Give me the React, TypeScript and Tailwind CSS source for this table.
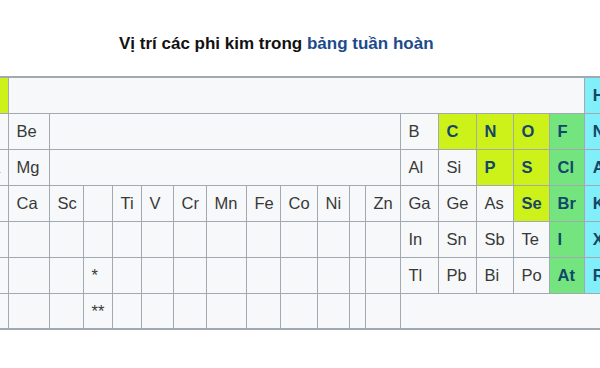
import React from "react";

type Kind = "yg" | "gr" | "cy" | "n" | "e";
type Cell = { t?: string; k: Kind; span?: number };

const widths = [38, 41, 34, 29, 29, 32, 33, 40, 34, 37, 32, 16, 35, 38, 38, 37, 36, 35, 36];

const E = (n = 1): Cell => ({ k: "e", span: n });
const N = (t: string): Cell => ({ t, k: "n" });
const Y = (t: string): Cell => ({ t, k: "yg" });
const G = (t: string): Cell => ({ t, k: "gr" });
const C = (t: string): Cell => ({ t, k: "cy" });

const emptyRun = (n: number): Cell[] => Array.from({ length: n }, () => E());

const rows: Cell[][] = [
  [Y("H"), E(17), C("He")],
  [N("Li"), N("Be"), E(11), N("B"), Y("C"), Y("N"), Y("O"), G("F"), C("Ne")],
  [N("Na"), N("Mg"), E(11), N("Al"), N("Si"), Y("P"), Y("S"), G("Cl"), C("Ar")],
  [
    N("K"), N("Ca"), N("Sc"), E(), N("Ti"), N("V"), N("Cr"), N("Mn"), N("Fe"), N("Co"), N("Ni"), E(), N("Zn"),
    N("Ga"), N("Ge"), N("As"), Y("Se"), G("Br"), C("Kr"),
  ],
  [N("Rb"), ...emptyRun(12), N("In"), N("Sn"), N("Sb"), N("Te"), G("I"), C("Xe")],
  [N("Cs"), E(), E(), N("*"), ...emptyRun(9), N("Tl"), N("Pb"), N("Bi"), N("Po"), G("At"), C("Rn")],
  [N("Fr"), E(), E(), N("**"), ...emptyRun(9), E(6)],
];

const cls: Record<Kind, string> = {
  yg: "bg-[#cdf21a] font-bold text-[#15466a]",
  gr: "bg-[#74e57e] font-bold text-[#15466a]",
  cy: "bg-[#80eff9] font-bold text-[#15466a]",
  n: "bg-[#f6f8fa] text-[#383838]",
  e: "bg-[#f6f8fa]",
};

export default function App() {
  return (
    <div
      className="w-[600px] h-[368px] overflow-hidden bg-white"
      style={{ fontFamily: '"Liberation Sans", Arial, sans-serif' }}
    >
      <div className="pt-[33px] pl-[119px] h-[76px] text-[17px] leading-[22px] font-bold text-[#111111] whitespace-nowrap">
        Vị trí các phi kim trong <span className="text-[#1d4b8a]">bảng tuần hoàn</span>
      </div>
      <table className="table-fixed border-collapse border-2 border-[#a2a9b1] ml-[-31px] w-[650px]">
        <colgroup>
          {widths.map((w, i) => (
            <col key={i} style={{ width: w }} />
          ))}
        </colgroup>
        <tbody>
          {rows.map((r, ri) => (
            <tr key={ri} className="h-[36px]">
              {r.map((c, ci) => (
                <td
                  key={ci}
                  colSpan={c.span ?? 1}
                  className={`border border-[#a2a9b1] p-0 pl-2 text-[16.5px] leading-[20px] whitespace-nowrap overflow-hidden ${cls[c.k]}`}
                >
                  {c.t ?? ""}
                </td>
              ))}
            </tr>
          ))}
        </tbody>
      </table>
    </div>
  );
}
